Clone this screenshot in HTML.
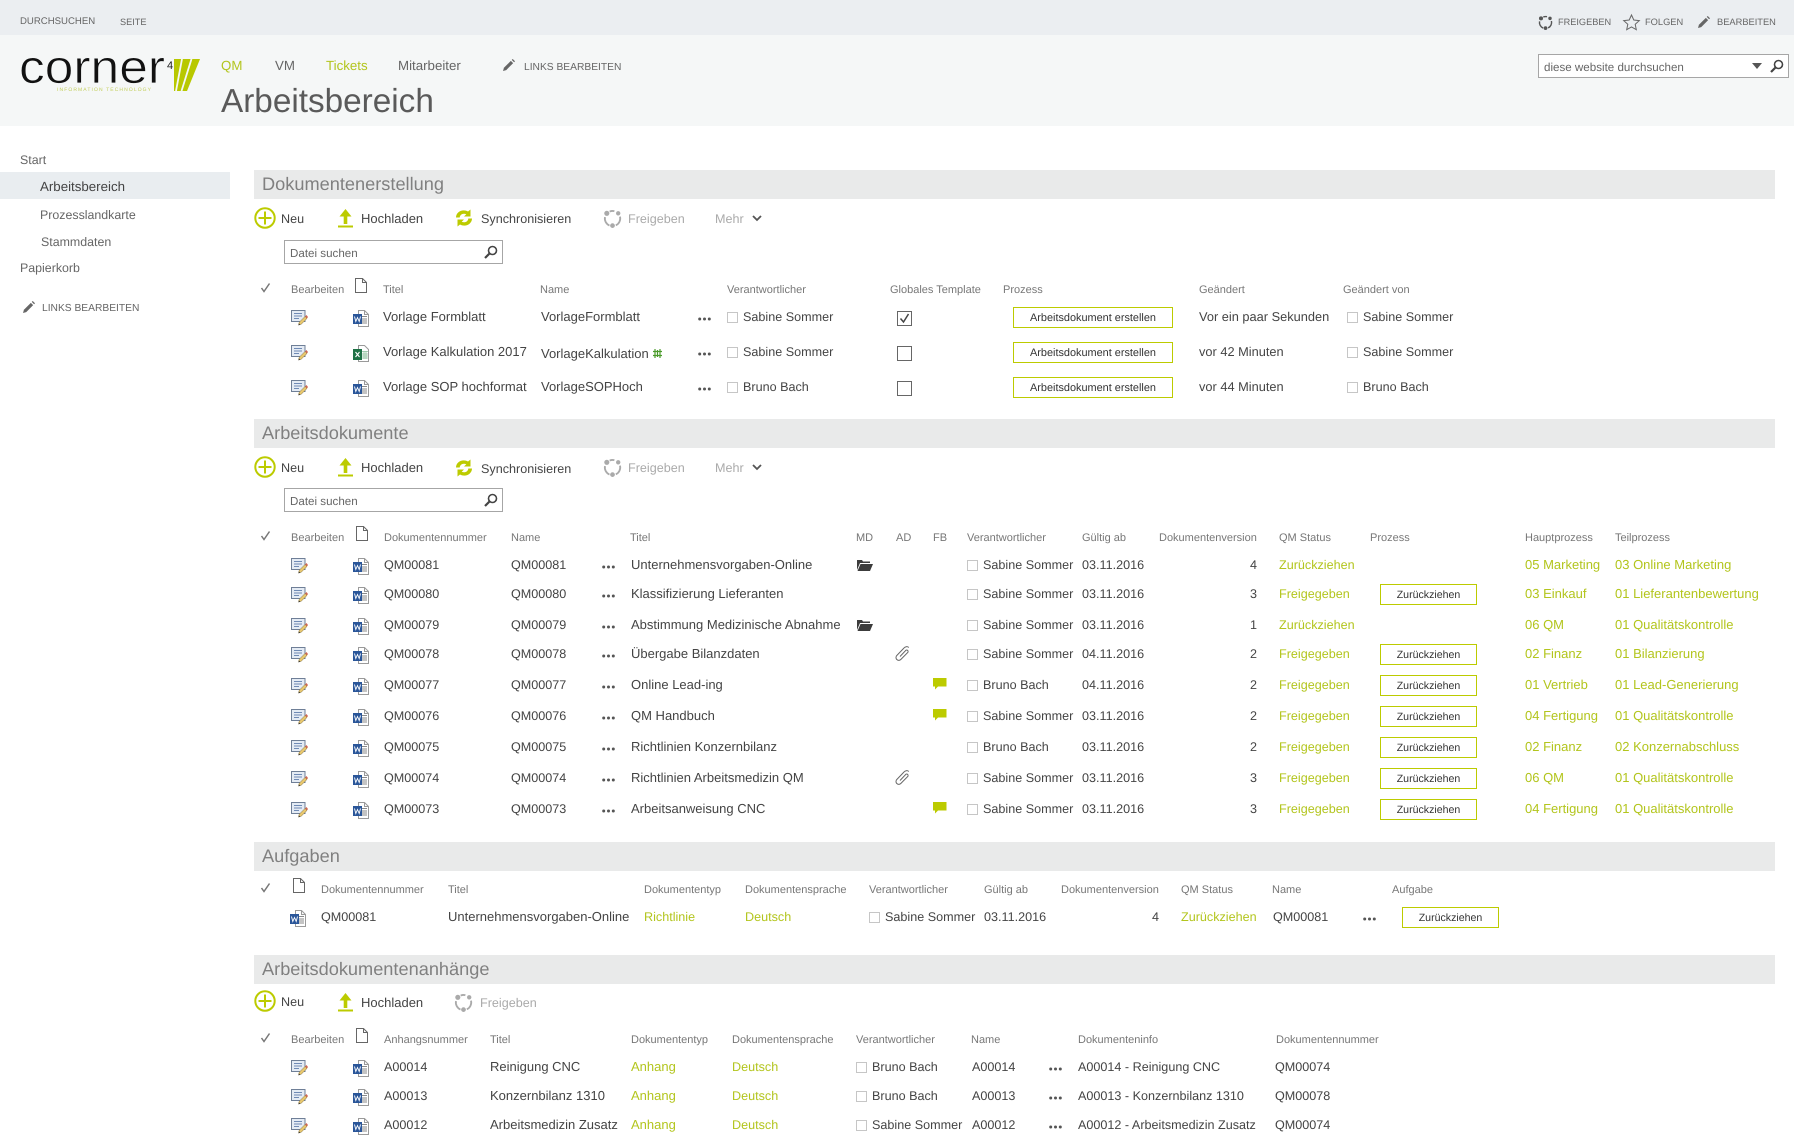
<!DOCTYPE html>
<html lang="de"><head><meta charset="utf-8"><title>Arbeitsbereich</title>
<style>
html,body{margin:0;padding:0;background:#fff}
body{position:relative;width:1794px;height:1140px;overflow:hidden;font-family:"Liberation Sans",sans-serif;font-size:12.6px;color:#444;text-rendering:geometricPrecision}
.abs,.r{position:absolute}
.r{left:0;top:0;height:0;width:1794px}
.r>*{position:absolute;top:-10px;line-height:20px;white-space:nowrap}
.r>svg{top:-7px;width:17px;height:17px;overflow:visible}
.r>span[style*="left:383px"],.r>span[style*="left:541px"],.r>span[style*="left:631px"],.r>span[style*="left:448px"],.r>span[style*="left:490px"],.r>span[style*="left:1525px"],.r>span[style*="left:1615px"]{font-size:13px}
.r>span[style*="left:1199px"]{font-size:12.8px}
.h{font-size:11px;color:#777}
.r.h>span[style]{font-size:11px;top:-8px}
.r.h>svg.t{top:-10px}
.r.h>svg.c{top:-6px}
.g{color:#b3c51d}
.band{position:absolute;left:254px;width:1521px;height:29px;background:#e9eaea;color:#808080;font-size:18.2px;line-height:28px;text-indent:8px}
.r>.b{box-sizing:border-box;height:21px;border:1.5px solid #bccb00;text-align:center;font-size:10.6px;line-height:20px;color:#333;top:-10px}
.r>.b[style*="left:1013px"]{font-size:10.9px}
.r>svg.d{top:0;width:13px;height:4px}
.r>svg.c{top:-5px;width:11px;height:11px}
.r>svg.t{top:-11px;width:12px;height:15px}
.r>svg.p{top:-11px;width:22px;height:22px}
.tb>span{margin-top:1px}
.tb>span[style*="left:361px"]{font-size:13px}
.f{color:#aaa}
.srch{position:absolute;box-sizing:border-box;border:1px solid #a6a6a6;background:#fff;height:24px;font-size:11.6px;line-height:25px;color:#666;padding-left:5px}
svg{display:block}
</style></head><body>
<svg width="0" height="0" style="position:absolute"><defs>
<symbol id="ed" viewBox="0 0 17 17"><rect x=".5" y=".5" width="13.5" height="11" fill="#e4ebf4" stroke="#6f7f97"/><path d="M3 3.500h8M3 6h8M3 8.500h5" stroke="#6f8ab5" stroke-width="1"/><path d="M7.500 15l.7-2.800L14 6.500l2 2-5.800 5.800z" fill="#e8c870" stroke="#7a6a40" stroke-width=".5"/><path d="M14 6.500l1.500-1.500 1.500 2-1 1.500z" fill="#cf6a55"/><path d="M7.500 15.500l.7-2 1 1z" fill="#333"/></symbol>
<symbol id="w" viewBox="0 0 17 17"><path d="M5.500.5h6l4 4v12h-10z" fill="#fff" stroke="#9a9a9a"/><path d="M8 6.500h6M9 9h5M9 11h5M9 13h5" stroke="#8a8a8a"/><path d="M11.500.5v4h4" fill="none" stroke="#9a9a9a"/><rect x="0" y="4" width="9" height="10" fill="#2a5699"/><path d="M1.500 6.500l1.300 5 1.700-4 1.700 4 1.300-5" fill="none" stroke="#fff" stroke-width=".9"/></symbol>
<symbol id="x" viewBox="0 0 17 17"><path d="M5.500.5h6l4 4v12h-10z" fill="#fff" stroke="#9a9a9a"/><path d="M9 6.500h6M9 9h6M9 11h6M9 13h6M11 6v8M13 6v8" stroke="#8cc09c" stroke-width=".8"/><rect x="0" y="4" width="9" height="11" fill="#1e7145"/><path d="M2.500 7l4 5M6.500 7l-4 5" stroke="#fff" stroke-width="1.100"/></symbol>
<symbol id="dots" viewBox="0 0 13 4"><circle cx="1.700" cy="2" r="1.500" fill="#555"/><circle cx="6.500" cy="2" r="1.500" fill="#555"/><circle cx="11.300" cy="2" r="1.500" fill="#555"/></symbol>
<symbol id="cb" viewBox="0 0 11 11"><rect x=".5" y=".5" width="10" height="10" fill="#fff" stroke="#c6c6c6"/></symbol>
<symbol id="doc" viewBox="0 0 12 15"><path d="M.5.500h7l4 4v10h-11zM7.500.5v4h4" fill="#fff" stroke="#666"/></symbol>
<symbol id="chk" viewBox="0 0 11 11"><path d="M1.500 6l2.500 3.500L9.500 1.500" fill="none" stroke="#777" stroke-width="1.500"/></symbol>
<symbol id="plus" viewBox="0 0 22 22"><circle cx="11" cy="11" r="9.700" fill="#fff" stroke="#bccb00" stroke-width="2"/><path d="M11 4.500v13M4.500 11h13" stroke="#bccb00" stroke-width="2"/></symbol>
<symbol id="up" viewBox="0 0 15 19"><path d="M7.500 0L13.500 7.500H9.300v7.500H5.700V7.500H1.500z" fill="#bccb00"/><rect x="0" y="16.500" width="15" height="2" fill="#bccb00"/></symbol>
<symbol id="sync" viewBox="0 0 18 18"><path d="M1 8.500C1 3 7.500-.5 13 2.500L15.500 .5V7.500H9l2.300-2.300C8 3.800 5 5.500 4.700 8.500z" fill="#bccb00"/><path d="M17 9.500c0 5.500-6.500 9-12 6L2.500 17.500v-7H9l-2.300 2.300c3.300 1.400 6.300-.3 6.600-3.300z" fill="#bccb00"/></symbol>
<symbol id="sh" viewBox="0 0 20 20"><path d="M7 2.700A8 8 0 0 1 12 2.300M17.900 8A8 8 0 0 1 13.500 17.200M6.800 17.400A8 8 0 0 1 2.100 8.500" fill="none" stroke="currentColor" stroke-width="1.900"/><circle cx="4" cy="4.500" r="2.700" fill="currentColor"/><circle cx="16" cy="4.500" r="2.300" fill="currentColor"/><circle cx="10" cy="17.500" r="2.500" fill="currentColor"/></symbol>
<symbol id="mag" viewBox="0 0 14 14"><circle cx="8.500" cy="5.500" r="4" fill="none" stroke="#444" stroke-width="1.600"/><path d="M5.500 8.500L1 13" stroke="#444" stroke-width="2.200"/></symbol>
<symbol id="pen" viewBox="0 0 13 13"><path d="M0 13l1-3.500L8.500 2l2.500 2.500L3.500 12z" fill="#666"/><path d="M9.500 1l1-1 2.500 2.500-1 1z" fill="#666"/></symbol>
<symbol id="fold" viewBox="0 0 17 13"><path d="M1 2h5l1 1.500h7V5H4L1 12z" fill="#3c3c3c"/><path d="M4.500 6H17l-3 7H1.500z" fill="#3c3c3c"/></symbol>
<symbol id="clip" viewBox="0 0 15 15"><path d="M5 10.500L11 4.200A1.500 1.500 0 0 1 13 6.200L5.800 13.500A2.800 2.800 0 0 1 1.800 9.500L9 2A3.300 3.300 0 0 1 13.800 1.500" fill="none" stroke="#666" stroke-width="1"/></symbol>
<symbol id="cm" viewBox="0 0 14 12"><path d="M0 0h13.500v8.500H5L2 11.500V8.500H0z" fill="#bccb00"/></symbol>
</defs></svg>

<!-- top bars -->
<div class="abs" style="left:0;top:0;width:1794px;height:35px;background:#ebeef1"></div>
<div class="abs" style="left:0;top:35px;width:1794px;height:91px;background:#f5f7f7"></div>
<div class="r" style="top:22px;font-size:9.600px;color:#666">
<span style="left:20px">DURCHSUCHEN</span><span style="left:120px;font-size:9.200px">SEITE</span>
<svg style="left:1538px;top:-7px;width:15px;height:15px;color:#555"><use href="#sh"/></svg>
<span style="left:1558px;font-size:9.200px">FREIGEBEN</span>
<svg style="left:1623px;top:-8px;width:17px;height:17px" viewBox="0 0 17 17"><path d="M8.500 1l2.300 5 5.500.6-4.100 3.700 1.100 5.400-4.800-2.700-4.800 2.700 1.100-5.400L.7 6.600 6.200 6z" fill="none" stroke="#666"/></svg>
<span style="left:1645px;font-size:9.300px">FOLGEN</span>
<svg style="left:1698px;top:-6px;width:12px;height:12px"><use href="#pen"/></svg>
<span style="left:1717px;font-size:9.300px">BEARBEITEN</span>
</div>

<!-- logo -->
<svg class="abs" style="left:10px;top:45px" width="200" height="60" viewBox="0 0 200 60">
<text x="9" y="38" font-family="Liberation Sans, sans-serif" font-size="47" fill="#111" stroke="#f5f7f7" stroke-width=".7" textLength="146" lengthAdjust="spacingAndGlyphs">corner</text>
<text x="157" y="24" font-family="Liberation Sans, sans-serif" font-size="11" fill="#222">4</text>
<text x="47" y="46" font-family="Liberation Sans, sans-serif" font-size="5" fill="#c3cf5c" textLength="94">INFORMATION  TECHNOLOGY</text>
<path d="M164 14h26l-13 32h-13z" fill="#b8c800"/>
<path d="M172 14l-6 32M181.500 14l-10 32" stroke="#f5f7f7" stroke-width="1.800"/>
</svg>

<!-- top nav -->
<div class="r" style="top:66px;font-size:13.300px;color:#666">
<span class="g" style="left:221px">QM</span><span style="left:275px">VM</span><span class="g" style="left:326px">Tickets</span><span style="left:398px">Mitarbeiter</span>
<svg style="left:503px;top:-7px;width:12px;height:12px"><use href="#pen"/></svg>
<span style="left:524px;top:-8px;font-size:10.250px">LINKS BEARBEITEN</span>
</div>
<div class="r" style="top:102px;font-size:33.300px;color:#5a5a5a"><span style="left:221px">Arbeitsbereich</span></div>

<!-- site search -->
<div class="srch" style="left:1538px;top:54px;width:251px">diese website durchsuchen</div>
<svg class="abs" style="left:1752px;top:63px" width="10" height="6" viewBox="0 0 10 6"><path d="M0 0h10L5 6z" fill="#555"/></svg>
<svg class="abs" style="left:1770px;top:59px" width="14" height="14"><use href="#mag"/></svg>

<!-- left nav -->
<div class="abs" style="left:0;top:172px;width:230px;height:27px;background:#e9edf0"></div>
<div class="r" style="top:160px;font-size:12.400px;color:#666"><span style="left:20px">Start</span></div>
<div class="r" style="top:187px;font-size:13.300px;color:#444"><span style="left:40px">Arbeitsbereich</span></div>
<div class="r" style="top:215px;font-size:12.400px;color:#666"><span style="left:40px">Prozesslandkarte</span></div>
<div class="r" style="top:242px;font-size:12.400px;color:#666"><span style="left:41px">Stammdaten</span></div>
<div class="r" style="top:268px;font-size:12.400px;color:#666"><span style="left:20px">Papierkorb</span></div>
<div class="r" style="top:309px;font-size:10.250px;color:#666"><svg style="left:23px;top:-8px;width:12px;height:12px"><use href="#pen"/></svg><span style="left:42px">LINKS BEARBEITEN</span></div>

<!-- Section 1 -->
<div class="band" style="top:170px;line-height:29px">Dokumentenerstellung</div>
<div class="r tb" style="top:218px">
<svg class="p" style="left:254px"><use href="#plus"/></svg><span style="left:281px">Neu</span>
<svg style="left:338px;top:-9px;width:15px;height:19px"><use href="#up"/></svg><span style="left:361px">Hochladen</span>
<svg style="left:455px;top:-9px;width:18px;height:18px"><use href="#sync"/></svg><span style="left:481px">Synchronisieren</span>
<svg style="left:603px;top:-9px;width:19px;height:19px;color:#aaa"><use href="#sh"/></svg><span class="f" style="left:628px">Freigeben</span>
<span class="f" style="left:715px">Mehr</span>
<svg style="left:752px;top:-3px;width:10px;height:7px" viewBox="0 0 10 7"><path d="M1 1l4 4 4-4" fill="none" stroke="#555" stroke-width="1.800"/></svg>
</div>
<div class="srch" style="left:284px;top:240px;width:219px">Datei suchen</div>
<svg class="abs" style="left:484px;top:245px" width="14" height="14"><use href="#mag"/></svg>

<div class="r h" style="top:288px">
<svg class="c" style="left:260px"><use href="#chk"/></svg>
<span style="left:291px">Bearbeiten</span><svg class="t" style="left:355px"><use href="#doc"/></svg>
<span style="left:383px">Titel</span><span style="left:540px">Name</span><span style="left:727px">Verantwortlicher</span><span style="left:890px">Globales Template</span><span style="left:1003px">Prozess</span><span style="left:1199px">Geändert</span><span style="left:1343px">Geändert von</span>
</div>

<div class="r" style="top:317px"><svg style="left:291px"><use href="#ed"/></svg><svg style="left:353px"><use href="#w"/></svg>
<span style="left:383px">Vorlage Formblatt</span><span style="left:541px">VorlageFormblatt</span><svg class="d" style="left:698px"><use href="#dots"/></svg><svg class="c" style="left:727px"><use href="#cb"/></svg><span style="left:743px">Sabine Sommer</span>
<svg style="left:897px;top:-6px;width:15px;height:15px" viewBox="0 0 15 15"><rect x=".5" y=".5" width="14" height="14" fill="#fff" stroke="#666"/><path d="M3.500 7.500l3 3.500 5-8" fill="none" stroke="#444" stroke-width="1.500"/></svg>
<span class="b" style="left:1013px;width:160px">Arbeitsdokument erstellen</span><span style="left:1199px">Vor ein paar Sekunden</span><svg class="c" style="left:1347px"><use href="#cb"/></svg><span style="left:1363px">Sabine Sommer</span></div>

<div class="r" style="top:352px"><svg style="left:291px"><use href="#ed"/></svg><svg style="left:353px"><use href="#x"/></svg>
<span style="left:383px">Vorlage Kalkulation 2017</span><span style="left:541px;top:-8px">VorlageKalkulation</span>
<svg style="left:653px;top:-3px;width:9px;height:9px" viewBox="0 0 9 9"><path d="M2 0v9M7 0v9M0 2.500h9M0 6.500h9M4.500 1v7" stroke="#4a9a2a" stroke-width="1.200"/></svg>
<svg class="d" style="left:698px"><use href="#dots"/></svg><svg class="c" style="left:727px"><use href="#cb"/></svg><span style="left:743px">Sabine Sommer</span>
<svg style="left:897px;top:-6px;width:15px;height:15px" viewBox="0 0 15 15"><rect x=".5" y=".5" width="14" height="14" fill="#fff" stroke="#666"/></svg>
<span class="b" style="left:1013px;width:160px">Arbeitsdokument erstellen</span><span style="left:1199px">vor 42 Minuten</span><svg class="c" style="left:1347px"><use href="#cb"/></svg><span style="left:1363px">Sabine Sommer</span></div>

<div class="r" style="top:387px"><svg style="left:291px"><use href="#ed"/></svg><svg style="left:353px"><use href="#w"/></svg>
<span style="left:383px">Vorlage SOP hochformat</span><span style="left:541px">VorlageSOPHoch</span><svg class="d" style="left:698px"><use href="#dots"/></svg><svg class="c" style="left:727px"><use href="#cb"/></svg><span style="left:743px">Bruno Bach</span>
<svg style="left:897px;top:-6px;width:15px;height:15px" viewBox="0 0 15 15"><rect x=".5" y=".5" width="14" height="14" fill="#fff" stroke="#666"/></svg>
<span class="b" style="left:1013px;width:160px">Arbeitsdokument erstellen</span><span style="left:1199px">vor 44 Minuten</span><svg class="c" style="left:1347px"><use href="#cb"/></svg><span style="left:1363px">Bruno Bach</span></div>

<!-- Section 2 -->
<div class="band" style="top:419px">Arbeitsdokumente</div>
<div class="r tb" style="top:467px">
<svg class="p" style="left:254px"><use href="#plus"/></svg><span style="left:281px">Neu</span>
<svg style="left:338px;top:-9px;width:15px;height:19px"><use href="#up"/></svg><span style="left:361px">Hochladen</span>
<svg style="left:455px;top:-8px;width:18px;height:18px"><use href="#sync"/></svg><span style="left:481px;top:-9px">Synchronisieren</span>
<svg style="left:603px;top:-9px;width:19px;height:19px;color:#aaa"><use href="#sh"/></svg><span class="f" style="left:628px">Freigeben</span>
<span class="f" style="left:715px">Mehr</span>
<svg style="left:752px;top:-3px;width:10px;height:7px" viewBox="0 0 10 7"><path d="M1 1l4 4 4-4" fill="none" stroke="#555" stroke-width="1.800"/></svg>
</div>
<div class="srch" style="left:284px;top:488px;width:219px">Datei suchen</div>
<svg class="abs" style="left:484px;top:493px" width="14" height="14"><use href="#mag"/></svg>

<div class="r h" style="top:536px">
<svg class="c" style="left:260px"><use href="#chk"/></svg>
<span style="left:291px">Bearbeiten</span><svg class="t" style="left:356px"><use href="#doc"/></svg>
<span style="left:384px">Dokumentennummer</span><span style="left:511px">Name</span><span style="left:630px">Titel</span><span style="left:856px">MD</span><span style="left:896px">AD</span><span style="left:933px">FB</span><span style="left:967px">Verantwortlicher</span><span style="left:1082px">Gültig ab</span><span style="left:1159px">Dokumentenversion</span><span style="left:1279px">QM Status</span><span style="left:1370px">Prozess</span><span style="left:1525px">Hauptprozess</span><span style="left:1615px">Teilprozess</span>
</div>

<div class="r" style="top:565px"><svg style="left:291px"><use href="#ed"/></svg><svg style="left:353px"><use href="#w"/></svg><span style="left:384px">QM00081</span><span style="left:511px">QM00081</span><svg class="d" style="left:602px"><use href="#dots"/></svg><span style="left:631px">Unternehmensvorgaben-Online</span>
<svg style="left:856px;top:-7px;width:17px;height:13px"><use href="#fold"/></svg>
<svg class="c" style="left:967px"><use href="#cb"/></svg><span style="left:983px">Sabine Sommer</span><span style="left:1082px">03.11.2016</span><span style="left:1250px">4</span><span class="g" style="left:1279px">Zurückziehen</span><span class="g" style="left:1525px">05 Marketing</span><span class="g" style="left:1615px">03 Online Marketing</span></div>

<div class="r" style="top:594px"><svg style="left:291px"><use href="#ed"/></svg><svg style="left:353px"><use href="#w"/></svg><span style="left:384px">QM00080</span><span style="left:511px">QM00080</span><svg class="d" style="left:602px"><use href="#dots"/></svg><span style="left:631px">Klassifizierung Lieferanten</span>
<svg class="c" style="left:967px"><use href="#cb"/></svg><span style="left:983px">Sabine Sommer</span><span style="left:1082px">03.11.2016</span><span style="left:1250px">3</span><span class="g" style="left:1279px">Freigegeben</span><span class="b" style="left:1380px;width:97px">Zurückziehen</span><span class="g" style="left:1525px">03 Einkauf</span><span class="g" style="left:1615px">01 Lieferantenbewertung</span></div>

<div class="r" style="top:625px"><svg style="left:291px"><use href="#ed"/></svg><svg style="left:353px"><use href="#w"/></svg><span style="left:384px">QM00079</span><span style="left:511px">QM00079</span><svg class="d" style="left:602px"><use href="#dots"/></svg><span style="left:631px">Abstimmung Medizinische Abnahme</span>
<svg style="left:856px;top:-7px;width:17px;height:13px"><use href="#fold"/></svg>
<svg class="c" style="left:967px"><use href="#cb"/></svg><span style="left:983px">Sabine Sommer</span><span style="left:1082px">03.11.2016</span><span style="left:1250px">1</span><span class="g" style="left:1279px">Zurückziehen</span><span class="g" style="left:1525px">06 QM</span><span class="g" style="left:1615px">01 Qualitätskontrolle</span></div>

<div class="r" style="top:654px"><svg style="left:291px"><use href="#ed"/></svg><svg style="left:353px"><use href="#w"/></svg><span style="left:384px">QM00078</span><span style="left:511px">QM00078</span><svg class="d" style="left:602px"><use href="#dots"/></svg><span style="left:631px">Übergabe Bilanzdaten</span>
<svg style="left:895px;top:-8px;width:15px;height:15px"><use href="#clip"/></svg>
<svg class="c" style="left:967px"><use href="#cb"/></svg><span style="left:983px">Sabine Sommer</span><span style="left:1082px">04.11.2016</span><span style="left:1250px">2</span><span class="g" style="left:1279px">Freigegeben</span><span class="b" style="left:1380px;width:97px">Zurückziehen</span><span class="g" style="left:1525px">02 Finanz</span><span class="g" style="left:1615px">01 Bilanzierung</span></div>

<div class="r" style="top:685px"><svg style="left:291px"><use href="#ed"/></svg><svg style="left:353px"><use href="#w"/></svg><span style="left:384px">QM00077</span><span style="left:511px">QM00077</span><svg class="d" style="left:602px"><use href="#dots"/></svg><span style="left:631px">Online Lead-ing</span>
<svg style="left:933px;top:-7px;width:14px;height:12px"><use href="#cm"/></svg>
<svg class="c" style="left:967px"><use href="#cb"/></svg><span style="left:983px">Bruno Bach</span><span style="left:1082px">04.11.2016</span><span style="left:1250px">2</span><span class="g" style="left:1279px">Freigegeben</span><span class="b" style="left:1380px;width:97px">Zurückziehen</span><span class="g" style="left:1525px">01 Vertrieb</span><span class="g" style="left:1615px">01 Lead-Generierung</span></div>

<div class="r" style="top:716px"><svg style="left:291px"><use href="#ed"/></svg><svg style="left:353px"><use href="#w"/></svg><span style="left:384px">QM00076</span><span style="left:511px">QM00076</span><svg class="d" style="left:602px"><use href="#dots"/></svg><span style="left:631px">QM Handbuch</span>
<svg style="left:933px;top:-7px;width:14px;height:12px"><use href="#cm"/></svg>
<svg class="c" style="left:967px"><use href="#cb"/></svg><span style="left:983px">Sabine Sommer</span><span style="left:1082px">03.11.2016</span><span style="left:1250px">2</span><span class="g" style="left:1279px">Freigegeben</span><span class="b" style="left:1380px;width:97px">Zurückziehen</span><span class="g" style="left:1525px">04 Fertigung</span><span class="g" style="left:1615px">01 Qualitätskontrolle</span></div>

<div class="r" style="top:747px"><svg style="left:291px"><use href="#ed"/></svg><svg style="left:353px"><use href="#w"/></svg><span style="left:384px">QM00075</span><span style="left:511px">QM00075</span><svg class="d" style="left:602px"><use href="#dots"/></svg><span style="left:631px">Richtlinien Konzernbilanz</span>
<svg class="c" style="left:967px"><use href="#cb"/></svg><span style="left:983px">Bruno Bach</span><span style="left:1082px">03.11.2016</span><span style="left:1250px">2</span><span class="g" style="left:1279px">Freigegeben</span><span class="b" style="left:1380px;width:97px">Zurückziehen</span><span class="g" style="left:1525px">02 Finanz</span><span class="g" style="left:1615px">02 Konzernabschluss</span></div>

<div class="r" style="top:778px"><svg style="left:291px"><use href="#ed"/></svg><svg style="left:353px"><use href="#w"/></svg><span style="left:384px">QM00074</span><span style="left:511px">QM00074</span><svg class="d" style="left:602px"><use href="#dots"/></svg><span style="left:631px">Richtlinien Arbeitsmedizin QM</span>
<svg style="left:895px;top:-8px;width:15px;height:15px"><use href="#clip"/></svg>
<svg class="c" style="left:967px"><use href="#cb"/></svg><span style="left:983px">Sabine Sommer</span><span style="left:1082px">03.11.2016</span><span style="left:1250px">3</span><span class="g" style="left:1279px">Freigegeben</span><span class="b" style="left:1380px;width:97px">Zurückziehen</span><span class="g" style="left:1525px">06 QM</span><span class="g" style="left:1615px">01 Qualitätskontrolle</span></div>

<div class="r" style="top:809px"><svg style="left:291px"><use href="#ed"/></svg><svg style="left:353px"><use href="#w"/></svg><span style="left:384px">QM00073</span><span style="left:511px">QM00073</span><svg class="d" style="left:602px"><use href="#dots"/></svg><span style="left:631px">Arbeitsanweisung CNC</span>
<svg style="left:933px;top:-7px;width:14px;height:12px"><use href="#cm"/></svg>
<svg class="c" style="left:967px"><use href="#cb"/></svg><span style="left:983px">Sabine Sommer</span><span style="left:1082px">03.11.2016</span><span style="left:1250px">3</span><span class="g" style="left:1279px">Freigegeben</span><span class="b" style="left:1380px;width:97px">Zurückziehen</span><span class="g" style="left:1525px">04 Fertigung</span><span class="g" style="left:1615px">01 Qualitätskontrolle</span></div>

<!-- Section 3 -->
<div class="band" style="top:842px">Aufgaben</div>
<div class="r h" style="top:888px">
<svg class="c" style="left:260px"><use href="#chk"/></svg><svg class="t" style="left:293px"><use href="#doc"/></svg>
<span style="left:321px">Dokumentennummer</span><span style="left:448px">Titel</span><span style="left:644px">Dokumententyp</span><span style="left:745px">Dokumentensprache</span><span style="left:869px">Verantwortlicher</span><span style="left:984px">Gültig ab</span><span style="left:1061px">Dokumentenversion</span><span style="left:1181px">QM Status</span><span style="left:1272px">Name</span><span style="left:1392px">Aufgabe</span>
</div>
<div class="r" style="top:917px"><svg style="left:290px"><use href="#w"/></svg><span style="left:321px">QM00081</span><span style="left:448px">Unternehmensvorgaben-Online</span><span class="g" style="left:644px">Richtlinie</span><span class="g" style="left:745px">Deutsch</span><svg class="c" style="left:869px"><use href="#cb"/></svg><span style="left:885px">Sabine Sommer</span><span style="left:984px">03.11.2016</span><span style="left:1152px">4</span><span class="g" style="left:1181px">Zurückziehen</span><span style="left:1273px">QM00081</span><svg class="d" style="left:1363px"><use href="#dots"/></svg><span class="b" style="left:1402px;width:97px">Zurückziehen</span></div>

<!-- Section 4 -->
<div class="band" style="top:955px">Arbeitsdokumentenanhänge</div>
<div class="r tb" style="top:1001px">
<svg class="p" style="left:254px"><use href="#plus"/></svg><span style="left:281px">Neu</span>
<svg style="left:338px;top:-8px;width:15px;height:19px"><use href="#up"/></svg><span style="left:361px;top:-9px">Hochladen</span>
<svg style="left:454px;top:-8px;width:19px;height:19px;color:#aaa"><use href="#sh"/></svg><span class="f" style="left:480px;top:-9px">Freigeben</span>
</div>
<div class="r h" style="top:1038px">
<svg class="c" style="left:260px"><use href="#chk"/></svg>
<span style="left:291px">Bearbeiten</span><svg class="t" style="left:356px"><use href="#doc"/></svg>
<span style="left:384px">Anhangsnummer</span><span style="left:490px">Titel</span><span style="left:631px">Dokumententyp</span><span style="left:732px">Dokumentensprache</span><span style="left:856px">Verantwortlicher</span><span style="left:971px">Name</span><span style="left:1078px">Dokumenteninfo</span><span style="left:1276px">Dokumentennummer</span>
</div>
<div class="r" style="top:1067px"><svg style="left:291px"><use href="#ed"/></svg><svg style="left:353px"><use href="#w"/></svg><span style="left:384px">A00014</span><span style="left:490px">Reinigung CNC</span><span class="g" style="left:631px">Anhang</span><span class="g" style="left:732px">Deutsch</span><svg class="c" style="left:856px"><use href="#cb"/></svg><span style="left:872px">Bruno Bach</span><span style="left:972px">A00014</span><svg class="d" style="left:1049px"><use href="#dots"/></svg><span style="left:1078px">A00014 - Reinigung CNC</span><span style="left:1275px">QM00074</span></div>
<div class="r" style="top:1096px"><svg style="left:291px"><use href="#ed"/></svg><svg style="left:353px"><use href="#w"/></svg><span style="left:384px">A00013</span><span style="left:490px">Konzernbilanz 1310</span><span class="g" style="left:631px">Anhang</span><span class="g" style="left:732px">Deutsch</span><svg class="c" style="left:856px"><use href="#cb"/></svg><span style="left:872px">Bruno Bach</span><span style="left:972px">A00013</span><svg class="d" style="left:1049px"><use href="#dots"/></svg><span style="left:1078px">A00013 - Konzernbilanz 1310</span><span style="left:1275px">QM00078</span></div>
<div class="r" style="top:1125px"><svg style="left:291px"><use href="#ed"/></svg><svg style="left:353px"><use href="#w"/></svg><span style="left:384px">A00012</span><span style="left:490px">Arbeitsmedizin Zusatz</span><span class="g" style="left:631px">Anhang</span><span class="g" style="left:732px">Deutsch</span><svg class="c" style="left:856px"><use href="#cb"/></svg><span style="left:872px">Sabine Sommer</span><span style="left:972px">A00012</span><svg class="d" style="left:1049px"><use href="#dots"/></svg><span style="left:1078px">A00012 - Arbeitsmedizin Zusatz</span><span style="left:1275px">QM00074</span></div>
</body></html>
